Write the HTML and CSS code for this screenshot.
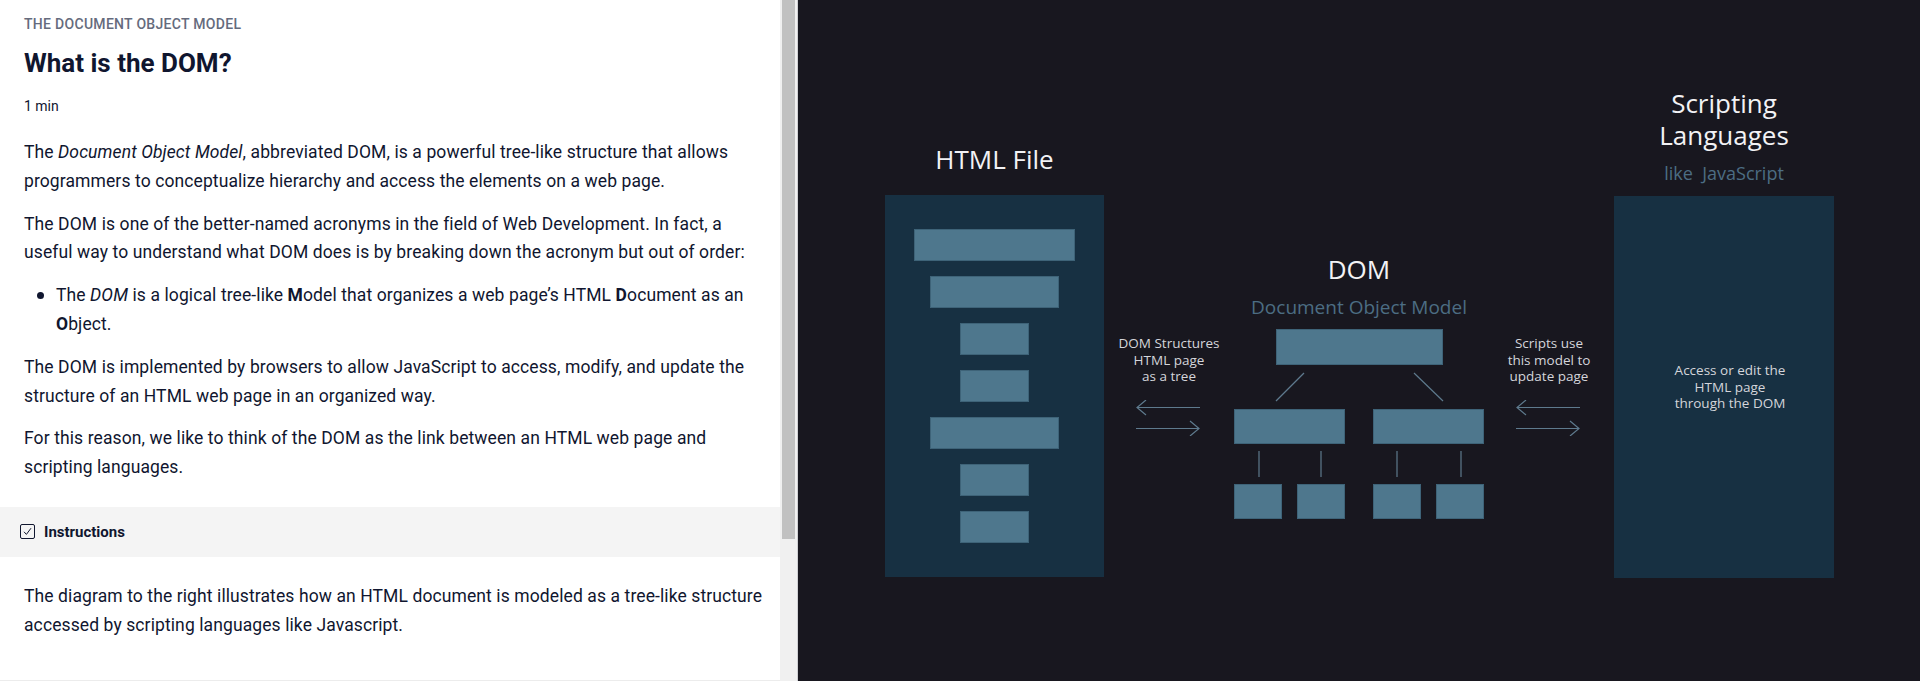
FILE: index.html
```html
<!DOCTYPE html>
<html lang="en">
<head>
<meta charset="utf-8">
<title>What is the DOM?</title>
<link rel="stylesheet" href="styles.css">
</head>
<body>
<div class="page">
  <section class="lesson">
    <div class="lesson-scroll">
      <div class="lesson-body">
        <p class="kicker">THE DOCUMENT OBJECT MODEL</p>
        <h1 class="title">What is the DOM?</h1>
        <p class="duration">1 min</p>
        <p class="para">The <em>Document Object Model</em>, abbreviated DOM, is a powerful tree-like structure that allows programmers to conceptualize hierarchy and access the elements on a web page.</p>
        <p class="para">The DOM is one of the better-named acronyms in the field of Web Development. In fact, a useful way to understand what DOM does is by breaking down the acronym but out of order:</p>
        <ul class="list">
          <li class="list-item">The <em>DOM</em> is a logical tree-like <strong>M</strong>odel that organizes a web page’s HTML <strong>D</strong>ocument as an <strong>O</strong>bject.</li>
        </ul>
        <p class="para">The DOM is implemented by browsers to allow JavaScript to access, modify, and update the structure of an HTML web page in an organized way.</p>
        <p class="para">For this reason, we like to think of the DOM as the link between an HTML web page and scripting languages.</p>
      </div>
      <div class="instructions-bar">
        <span class="checkbox">
          <svg width="15" height="15" viewBox="0 0 15 15"><rect x="0.5" y="0.5" width="14" height="14" rx="1.5" fill="none" stroke="#10162f" stroke-width="1"/><path d="M4 7.8 L6.4 10.4 L11 4.2" fill="none" stroke="#10162f" stroke-width="1"/></svg>
        </span>
        <span class="instructions-label">Instructions</span>
      </div>
      <div class="lesson-body instructions-body">
        <p class="para">The diagram to the right illustrates how an HTML document is modeled as a tree-like structure accessed by scripting languages like Javascript.</p>
      </div>
    </div>
    <div class="scrollbar"><div class="scrollbar-thumb"></div></div>
  </section>

  <section class="diagram">
    <div class="column html-col">
      <h2 class="diagram-title">HTML File</h2>
      <div class="file-box">
        <div class="bar bar-wide"></div>
        <div class="bar bar-mid"></div>
        <div class="bar bar-small"></div>
        <div class="bar bar-small"></div>
        <div class="bar bar-mid"></div>
        <div class="bar bar-small"></div>
        <div class="bar bar-small"></div>
      </div>
    </div>

    <div class="note note-left">
      <p class="note-text">DOM Structures<br>HTML page<br>as a tree</p>
      <svg class="arrows" width="66" height="36" viewBox="0 0 66 36">
        <path d="M1 7.5 H64 M10 0 L1 7.5 L10 15" fill="none" stroke="#5e7a8d" stroke-width="1.2"/>
        <path d="M0 28.5 H63 M54 21 L63 28.5 L54 36" fill="none" stroke="#5e7a8d" stroke-width="1.2"/>
      </svg>
    </div>

    <div class="column dom-col">
      <h2 class="diagram-title">DOM</h2>
      <p class="diagram-sub">Document Object Model</p>
      <svg class="tree" width="250" height="191" viewBox="0 0 250 191">
        <g fill="#4e778d" stroke="#3e6378" stroke-width="1">
          <rect x="42.5" y="0.5" width="166" height="35"/>
          <rect x="0.5" y="80.5" width="110" height="34"/>
          <rect x="139.5" y="80.5" width="110" height="34"/>
          <rect x="0.5" y="155.5" width="47" height="34"/>
          <rect x="63.5" y="155.5" width="47" height="34"/>
          <rect x="139.5" y="155.5" width="47" height="34"/>
          <rect x="202.5" y="155.5" width="47" height="34"/>
        </g>
        <g stroke="#5e7a8d" stroke-width="1.2" fill="none">
          <path d="M70 44 L42 72"/>
          <path d="M180 44 L209 72"/>
          <path d="M25 122 V148"/>
          <path d="M87 122 V148"/>
          <path d="M163 122 V148"/>
          <path d="M227 122 V148"/>
        </g>
      </svg>
    </div>

    <div class="note note-right">
      <p class="note-text">Scripts use<br>this model to<br>update page</p>
      <svg class="arrows" width="66" height="36" viewBox="0 0 66 36">
        <path d="M1 7.5 H64 M10 0 L1 7.5 L10 15" fill="none" stroke="#5e7a8d" stroke-width="1.2"/>
        <path d="M0 28.5 H63 M54 21 L63 28.5 L54 36" fill="none" stroke="#5e7a8d" stroke-width="1.2"/>
      </svg>
    </div>

    <div class="column script-col">
      <h2 class="diagram-title">Scripting<br>Languages</h2>
      <p class="diagram-sub small">like&nbsp; JavaScript</p>
      <div class="script-box">
        <p class="script-text">Access or edit the<br>HTML page<br>through the DOM</p>
      </div>
    </div>
  </section>
</div>
</body>
</html>
```

FILE: styles.css
```css
* { box-sizing: border-box; }

html, body {
  margin: 0;
  padding: 0;
  width: 1920px;
  height: 681px;
  overflow: hidden;
}

body {
  font-family: Roboto, "Liberation Sans", sans-serif;
  color: #10162f;
  background: #ffffff;
}

.page {
  display: flex;
  height: 681px;
}

/* ---------- left lesson panel ---------- */
.lesson {
  display: flex;
  width: 798px;
  flex: 0 0 798px;
  height: 681px;
  border-right: 1px solid #cfcfd3;
}

.lesson-scroll {
  width: 780px;
  height: 681px;
  overflow: hidden;
  background: #ffffff;
  border-bottom: 1px solid #ececec;
}

.lesson-body {
  padding: 14px 13px 0 24px;
}

.kicker {
  margin: 0;
  font-size: 14px;
  line-height: 20px;
  font-weight: 500;
  letter-spacing: 0.3px;
  color: #656b7d;
}

.title {
  margin: 13px 0 0 0;
  font-size: 26px;
  line-height: 32px;
  font-weight: 700;
  color: #10162f;
}

.duration {
  margin: 17px 0 0 0;
  font-size: 14px;
  line-height: 20px;
  color: #10162f;
}

.para {
  margin: 0 0 14px 0;
  font-size: 17.5px;
  line-height: 28.8px;
  letter-spacing: 0.1px;
  color: #10162f;
}

.duration + .para { margin-top: 22px; }

.list {
  margin: 0 0 14px 0;
  padding: 0 0 0 32px;
  list-style: none;
  font-size: 17.5px;
  line-height: 28.8px;
  letter-spacing: 0.1px;
}

.list-item {
  position: relative;
}

.list-item::before {
  content: "";
  position: absolute;
  left: -19px;
  top: 11px;
  width: 7px;
  height: 7px;
  border-radius: 50%;
  background: #10162f;
}

.instructions-bar {
  display: flex;
  align-items: center;
  gap: 9px;
  height: 50px;
  margin-top: 25px;
  padding-left: 20px;
  background: #f4f4f4;
}

.checkbox {
  display: flex;
  width: 15px;
  height: 15px;
}

.instructions-label {
  font-size: 15px;
  font-weight: 700;
  color: #10162f;
}

.instructions-body {
  padding-top: 25px;
}

.scrollbar {
  width: 17px;
  height: 681px;
  padding: 0 2px;
  background: #f0f0f0;
}

.scrollbar-thumb {
  width: 13px;
  height: 539px;
  background: #c1c1c1;
}

/* ---------- right diagram panel ---------- */
.diagram {
  position: relative;
  flex: 1;
  height: 681px;
  background: #18171f;
  font-family: "Open Sans", "Noto Sans", sans-serif;
  color: #ececf0;
}

.column,
.note {
  position: absolute;
  display: flex;
  flex-direction: column;
  align-items: center;
}

.diagram-title {
  margin: 0;
  font-size: 26px;
  line-height: 32px;
  font-weight: 400;
  text-align: center;
  color: #f2f2f5;
}

.diagram-sub {
  margin: 10px 0 0 0;
  font-size: 19px;
  line-height: 24px;
  color: #4c6d83;
  text-align: center;
}

.diagram-sub.small {
  margin-top: 10px;
  font-size: 18px;
}

/* HTML file column */
.html-col {
  left: 87px;
  top: 143px;
  width: 219px;
}

.file-box {
  display: flex;
  flex-direction: column;
  align-items: center;
  gap: 15px;
  width: 219px;
  height: 382px;
  margin-top: 20px;
  padding-top: 34px;
  background: #173042;
}

.bar {
  height: 32px;
  background: #4e778d;
  border: 1px solid #3e6378;
}

.bar-wide { width: 161px; }
.bar-mid { width: 129px; }
.bar-small { width: 69px; }

/* notes with arrows */
.note {
  top: 335px;
  width: 120px;
}

.note-left { left: 311px; }
.note-right { left: 691px; }

.note-text {
  margin: 0 0 15px 0;
  font-size: 13.5px;
  line-height: 16.5px;
  text-align: center;
  color: #d4d5db;
}

.arrows { display: block; }

/* DOM column */
.dom-col {
  left: 436px;
  top: 253px;
  width: 250px;
}

.tree {
  display: block;
  margin-top: 10px;
}

/* scripting column */
.script-col {
  left: 816px;
  top: 87px;
  width: 220px;
}

.script-box {
  width: 220px;
  height: 382px;
  margin-top: 11px;
  padding: 166px 0 0 12px;
  background: #173042;
}

.script-text {
  margin: 0;
  font-size: 13.5px;
  line-height: 16.5px;
  text-align: center;
  color: #d4d5db;
}
```
